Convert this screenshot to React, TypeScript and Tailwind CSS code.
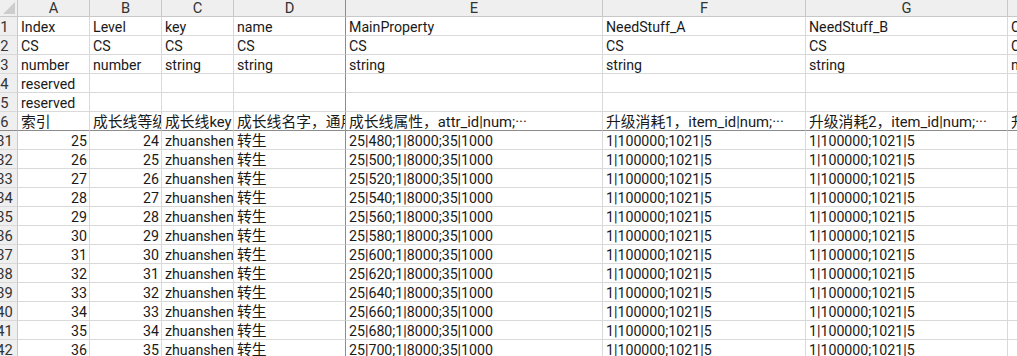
const font = {
  fontFamily: 'Roboto, "Noto Sans CJK SC", sans-serif',
};

const letters = ["A", "B", "C", "D", "E", "F", "G", "H"];

type Cell = { text: string; right?: boolean; cjk?: boolean };

const headRows: { num: string; cells: string[] }[] = [
  {
    num: "1",
    cells: ["Index", "Level", "key", "name", "MainProperty", "NeedStuff_A", "NeedStuff_B", "C"],
  },
  { num: "2", cells: ["CS", "CS", "CS", "CS", "CS", "CS", "CS", "C"] },
  {
    num: "3",
    cells: ["number", "number", "string", "string", "string", "string", "string", "n"],
  },
  { num: "4", cells: ["reserved", "", "", "", "", "", "", ""] },
  { num: "5", cells: ["reserved", "", "", "", "", "", "", ""] },
];

const titleRow = [
  "索引",
  "成长线等级",
  "成长线key",
  "成长线名字，通用",
  "成长线属性，attr_id|num;···",
  "升级消耗1，item_id|num;···",
  "升级消耗2，item_id|num;···",
  "升级",
];

const dataRows = Array.from({ length: 12 }, (_, i) => ({
  num: String(31 + i),
  cells: [
    { text: String(25 + i), right: true },
    { text: String(24 + i), right: true },
    { text: "zhuanshen" },
    { text: "转生", cjk: true },
    { text: `25|${480 + i * 20};1|8000;35|1000` },
    { text: "1|100000;1021|5" },
    { text: "1|100000;1021|5" },
    { text: "" },
  ] as Cell[],
}));

const allRows = [
  ...headRows.map((r) => ({ num: r.num, cells: r.cells.map((t) => ({ text: t })) as Cell[] })),
  { num: "6", cells: titleRow.map((t) => ({ text: t, cjk: true })) as Cell[] },
  ...dataRows,
];

const App = () => {
  return (
    <div className="w-[1017px] h-[356px] overflow-hidden bg-white" style={font}>
      <div className="-ml-[8px] grid grid-cols-[26px_72px_72px_72px_112px_257px_203px_202px_80px] text-[14.2px] text-[#1a1a1a]">
        {/* column header row */}
        <div className="relative h-[17px] bg-[#efefef] border-r border-b border-[#c8c8c8] overflow-hidden">
          <div className="absolute right-[2px] bottom-[2px] w-0 h-0 border-l-[12px] border-l-transparent border-b-[12px] border-b-[#cdcdcd]" />
        </div>
        {letters.map((l, i) => (
          <div
            key={l}
            className={`h-[17px] bg-[#efefef] border-b border-[#c8c8c8] flex items-center justify-center text-[14.7px] text-[#333] leading-none ${
              i === 3 ? "border-r border-r-[#8c8c8c]" : "border-r"
            }`}
          >
            {l}
          </div>
        ))}

        {allRows.map((row) => {
          const freeze = row.num === "6";
          return (
            <div key={row.num} className="contents">
              <div
                className={`h-[19px] bg-[#efefef] border-r border-[#c8c8c8] pt-[2px] leading-[17px] text-center text-[14.7px] text-[#333] ${
                  freeze ? "border-b border-b-[#8c8c8c]" : "border-b border-b-[#d9d9d9]"
                }`}
              >
                {row.num}
              </div>
              {row.cells.map((c, i) => (
                <div
                  key={i}
                  className={`h-[19px] overflow-hidden whitespace-nowrap pt-[2px] leading-[17px] ${
                    c.cjk ? "text-[14.8px]" : ""
                  } ${c.right ? "text-right pr-[2px]" : "pl-[3px]"} ${
                    i === 3 ? "border-r border-r-[#8c8c8c]" : "border-r border-r-[#d9d9d9]"
                  } ${freeze ? "border-b border-b-[#8c8c8c]" : "border-b border-b-[#d9d9d9]"}`}
                >
                  {c.text}
                </div>
              ))}
            </div>
          );
        })}
      </div>
    </div>
  );
};

export default App;
